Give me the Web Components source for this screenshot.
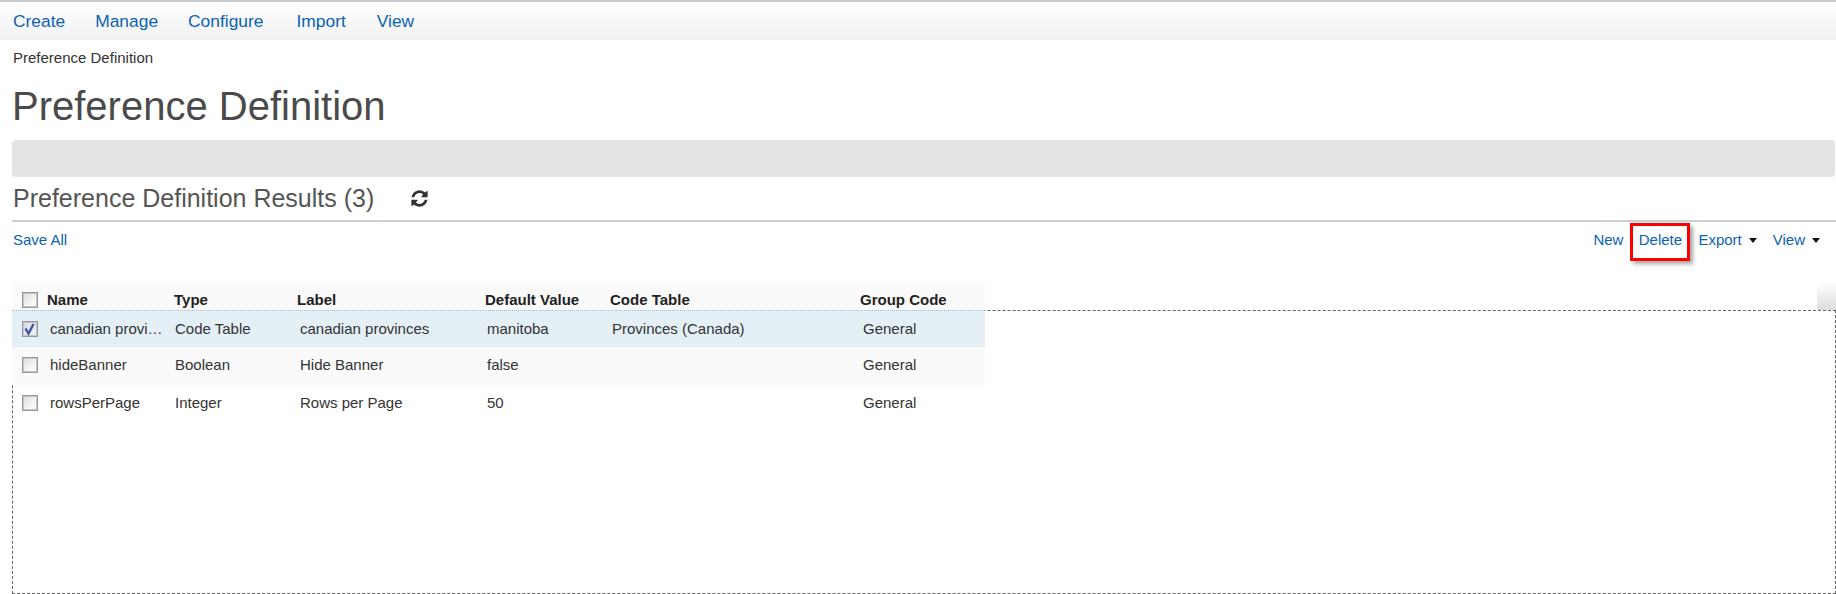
<!DOCTYPE html>
<html lang="en">
<head>
<meta charset="utf-8">
<title>Preference Definition</title>
<style>
  html, body { margin: 0; background: #fff; }
  body { font-family: "Liberation Sans", Arial, sans-serif; color: #333; overflow: hidden; }
</style>
</head>
<body>
<app-menu>
  <a>Create</a>
  <a>Manage</a>
  <a>Configure</a>
  <a>Import</a>
  <a>View</a>
</app-menu>
<page-head crumb="Preference Definition" heading="Preference Definition"></page-head>
<results-head heading="Preference Definition Results (3)"></results-head>
<results-toolbar></results-toolbar>
<pref-table>
  <pref-row name="canadian provi…" type="Code Table" label="canadian provinces" value="manitoba" table="Provinces (Canada)" group="General" selected></pref-row>
  <pref-row name="hideBanner" type="Boolean" label="Hide Banner" value="false" group="General" shaded></pref-row>
  <pref-row name="rowsPerPage" type="Integer" label="Rows per Page" value="50" group="General"></pref-row>
</pref-table>

<script>
const COLUMNS = '35px 127px 123px 188px 125px 250px 125px';

class AppMenu extends HTMLElement {
  constructor() {
    super();
    this.attachShadow({ mode: 'open' });
    this.shadowRoot.innerHTML = `
      <style>
        :host { display: flex; gap: 30px; height: 38px; padding: 0 13px; align-items: center; box-sizing: content-box;
                border-top: 2px solid #ccc; background: linear-gradient(#fff, #f1f1f1); font-size: 17.4px; }
        ::slotted(a) { color: #0b62b3; }
        ::slotted(a:nth-child(4)) { margin-left: 3px; }
        ::slotted(a:nth-child(5)) { margin-left: 1px; }
      </style>
      <slot></slot>`;
  }
}

class PageHead extends HTMLElement {
  constructor() {
    super();
    this.attachShadow({ mode: 'open' });
  }
  connectedCallback() {
    this.shadowRoot.innerHTML = `
      <style>
        :host { display: block; padding: 0 0 0 12px; }
        .crumb { font-size: 15px; line-height: 17px; padding: 9px 0 0 1px; color: #333; }
        h1 { margin: 0; padding-top: 17px; height: 57px; box-sizing: content-box; font-size: 40px; line-height: 46px; font-weight: normal; color: #4a4a4a; }
        .bar { height: 37px; background: #e4e4e4; border-radius: 4px; margin-right: 1px; }
      </style>
      <div class="crumb">${this.getAttribute('crumb')}</div>
      <h1>${this.getAttribute('heading')}</h1>
      <div class="bar"></div>`;
  }
}

class ResultsHead extends HTMLElement {
  constructor() {
    super();
    this.attachShadow({ mode: 'open' });
  }
  connectedCallback() {
    this.shadowRoot.innerHTML = `
      <style>
        :host { display: flex; align-items: center; gap: 36px; height: 43px; margin-left: 12px; padding-left: 1px;
                border-bottom: 2px solid #d0d0d0; font-size: 25px; color: #555; }
        svg { width: 19px; height: 19px; fill: #333; }
      </style>
      <span>${this.getAttribute('heading')}</span>
      <svg viewBox="0 0 1792 1792"><path d="M1639 1056q0 5-1 7-64 268-268 434.5t-478 166.5q-146 0-282.5-55t-243.5-157l-129 129q-19 19-45 19t-45-19-19-45v-448q0-26 19-45t45-19h448q26 0 45 19t19 45-19 45l-137 137q71 66 161 102t187 36q134 0 250-65t186-179q11-17 53-117 8-23 30-23h192q13 0 22.5 9.5t9.5 22.5zm25-800v448q0 26-19 45t-45 19h-448q-26 0-45-19t-19-45 19-45l138-138q-148-137-349-137-134 0-250 65t-186 179q-11 17-53 117-8 23-30 23h-199q-13 0-22.5-9.5t-9.5-22.5v-7q65-268 270-434.5t480-166.5q146 0 284 55.5t245 156.5l130-129q19-19 45-19t45 19 19 45z"/></svg>`;
  }
}

class ResultsToolbar extends HTMLElement {
  constructor() {
    super();
    this.attachShadow({ mode: 'open' });
    this.shadowRoot.innerHTML = `
      <style>
        :host { display: flex; justify-content: space-between; align-items: center; height: 38px; margin-top: 1px;
                padding: 0 16px 0 13px; font-size: 15px; color: #0b62b3; }
        .actions { display: flex; align-items: center; }
        .save, .new, .menu { position: relative; top: -3px; }
        .new { margin-right: 7px; }
        .marked { box-sizing: border-box; width: 60px; height: 38px; padding-bottom: 6px; display: flex; align-items: center; justify-content: center;
                  border: 3px solid #f00; box-shadow: 3px 3px 4px rgba(0,0,0,.35); margin-right: 8px; }
        .menu { display: flex; align-items: center; gap: 7px; }
        .menu + .menu { margin-left: 16px; }
        .menu::after { content: ""; border: 4.5px solid transparent; border-top: 5px solid #111; border-bottom: 0; margin-top: 2px; }
      </style>
      <span class="save">Save All</span>
      <div class="actions">
        <span class="new">New</span>
        <span class="marked">Delete</span>
        <span class="menu">Export</span>
        <span class="menu">View</span>
      </div>`;
  }
}

class CheckBox extends HTMLElement {
  constructor() {
    super();
    this.attachShadow({ mode: 'open' });
  }
  connectedCallback() {
    const check = this.hasAttribute('checked')
      ? '<svg viewBox="0 0 14 14"><path d="M2.5 6.5 5.5 11.5 10.5 2" fill="none" stroke="#3f55a0" stroke-width="2.4"/></svg>'
      : '';
    this.shadowRoot.innerHTML = `
      <style>
        :host { display: block; box-sizing: border-box; width: 16px; height: 16px; border: 1px solid #999;
                box-shadow: inset 0 0 0 1px #c4c4c4;
                background: linear-gradient(135deg, #dcdcdc, #f8f8f8 70%); }
        :host([checked]) { background: linear-gradient(135deg, #d4d6e6, #eceef6 70%); }
        svg { display: block; width: 14px; height: 14px; }
      </style>${check}`;
  }
}

class PrefTable extends HTMLElement {
  constructor() {
    super();
    this.attachShadow({ mode: 'open' });
    this.shadowRoot.innerHTML = `
      <style>
        :host { display: block; margin: 21px 0 0 12px; font-size: 15px; }
        .top { display: flex; height: 28px; }
        .head { display: grid; grid-template-columns: ${COLUMNS}; width: 973px; background: #fafafa; font-weight: bold; color: #222; align-items: end; }
        .head span { line-height: 18px; padding-bottom: 1px; white-space: nowrap; }
        .head check-box { margin: 0 0 2px 10px; }
        .spacer { flex: 1; }
        .scroll { width: 19px; background: linear-gradient(#fff, #ddd); }
        .body { box-sizing: border-box; height: 284px; border: 1px dashed #666; }
        ::slotted(pref-row) { margin: -1px 0 0 -1px; }
      </style>
      <div class="top">
        <div class="head">
          <check-box></check-box>
          <span>Name</span><span>Type</span><span>Label</span><span>Default Value</span><span>Code Table</span><span>Group Code</span>
        </div>
        <div class="spacer"></div>
        <div class="scroll"></div>
      </div>
      <div class="body"><slot></slot></div>`;
  }
}

class PrefRow extends HTMLElement {
  constructor() {
    super();
    this.attachShadow({ mode: 'open' });
  }
  connectedCallback() {
    const cell = (name, pad) => `<span style="padding-left:${pad}px">${this.getAttribute(name) || ''}</span>`;
    this.shadowRoot.innerHTML = `
      <style>
        :host { display: grid; grid-template-columns: ${COLUMNS}; align-items: center; width: 973px; height: 38px;
                box-sizing: border-box; color: #333; border-top: 1px solid transparent; border-bottom: 1px solid transparent; }
        :host([selected]) { background: #e4eff6; border-top: 1px dotted #a3bbdc; border-bottom: 1px dotted #a3bbdc; }
        :host([shaded]) { background: #fafafa; padding-bottom: 2px; }
        span { white-space: nowrap; position: relative; top: -1px; }
        check-box { margin-left: 10px; }
      </style>
      <check-box ${this.hasAttribute('selected') ? 'checked' : ''}></check-box>
      ${cell('name', 3)}${cell('type', 1)}${cell('label', 3)}${cell('value', 2)}${cell('table', 2)}${cell('group', 3)}`;
  }
}

customElements.define('app-menu', AppMenu);
customElements.define('page-head', PageHead);
customElements.define('results-head', ResultsHead);
customElements.define('results-toolbar', ResultsToolbar);
customElements.define('check-box', CheckBox);
customElements.define('pref-table', PrefTable);
customElements.define('pref-row', PrefRow);
</script>
</body>
</html>
